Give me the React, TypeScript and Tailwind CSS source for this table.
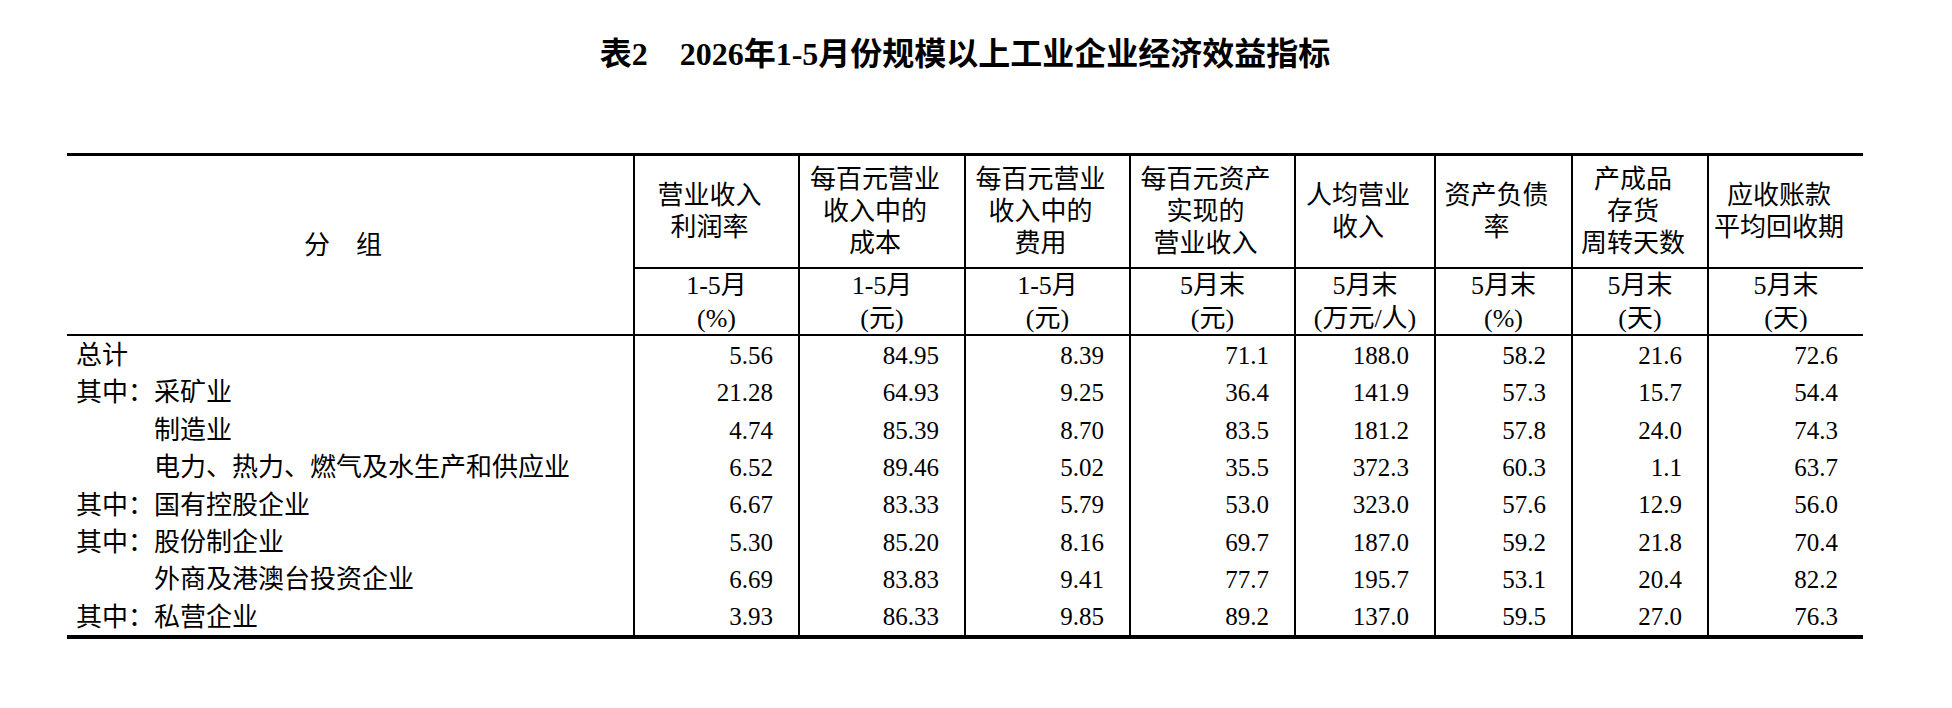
import React from "react";

const cols = "grid-cols-[566px_165px_166px_165px_165px_140px_137px_136px_156px]";

const headTop: string[][] = [
  ["营业收入", "利润率"],
  ["每百元营业", "收入中的", "成本"],
  ["每百元营业", "收入中的", "费用"],
  ["每百元资产", "实现的", "营业收入"],
  ["人均营业", "收入"],
  ["资产负债", "率"],
  ["产成品", "存货", "周转天数"],
  ["应收账款", "平均回收期"],
];

const headUnit: string[][] = [
  ["1-5月", "(%)"],
  ["1-5月", "(元)"],
  ["1-5月", "(元)"],
  ["5月末", "(元)"],
  ["5月末", "(万元/人)"],
  ["5月末", "(%)"],
  ["5月末", "(天)"],
  ["5月末", "(天)"],
];

type Row = { prefix?: string; indent?: boolean; name: string; values: string[] };

const rows: Row[] = [
  { name: "总计", values: ["5.56", "84.95", "8.39", "71.1", "188.0", "58.2", "21.6", "72.6"] },
  { prefix: "其中：", name: "采矿业", values: ["21.28", "64.93", "9.25", "36.4", "141.9", "57.3", "15.7", "54.4"] },
  { indent: true, name: "制造业", values: ["4.74", "85.39", "8.70", "83.5", "181.2", "57.8", "24.0", "74.3"] },
  { indent: true, name: "电力、热力、燃气及水生产和供应业", values: ["6.52", "89.46", "5.02", "35.5", "372.3", "60.3", "1.1", "63.7"] },
  { prefix: "其中：", name: "国有控股企业", values: ["6.67", "83.33", "5.79", "53.0", "323.0", "57.6", "12.9", "56.0"] },
  { prefix: "其中：", name: "股份制企业", values: ["5.30", "85.20", "8.16", "69.7", "187.0", "59.2", "21.8", "70.4"] },
  { indent: true, name: "外商及港澳台投资企业", values: ["6.69", "83.83", "9.41", "77.7", "195.7", "53.1", "20.4", "82.2"] },
  { prefix: "其中：", name: "私营企业", values: ["3.93", "86.33", "9.85", "89.2", "137.0", "59.5", "27.0", "76.3"] },
];

export default function App() {
  return (
    <div className="min-h-[708px] w-[1952px] bg-white text-black font-['Liberation_Serif','Noto_Sans_CJK_SC',serif]">
      <div className="ml-[67px] w-[1796px] pt-[34px]">
        {/* Title */}
        <h1 className="text-center text-[32px] leading-[40px] font-bold">表2　2026年1-5月份规模以上工业企业经济效益指标</h1>

        {/* Table */}
        <div className="mt-[79px] border-t-[3px] border-b-4 border-black text-[26px]">
          {/* Header */}
          <div className={`grid ${cols} grid-rows-[113px_65px] border-b-2 border-black`}>
            <div className="row-span-2 flex items-center justify-center pr-[14px]">分　组</div>
            {headTop.map((lines, i) => (
              <div key={i} className="flex flex-col items-center justify-center border-l-2 border-b-2 border-black pr-[14px] leading-[32px]">
                {lines.map(l => <span key={l}>{l}</span>)}
              </div>
            ))}
            {headUnit.map((lines, i) => (
              <div key={i} className="flex flex-col items-center justify-center border-l-2 border-black leading-[33px]">
                {lines.map(l => <span key={l}>{l}</span>)}
              </div>
            ))}
          </div>

          {/* Body */}
          {rows.map(row => (
            <div key={row.name} className={`grid ${cols} h-[37.4px]`}>
              <div className="flex items-center pl-[9px] whitespace-nowrap">
                {row.prefix ? <span className="inline-block w-[78px]">{row.prefix}</span> : row.indent ? <span className="inline-block w-[78px]" /> : null}
                <span>{row.name}</span>
              </div>
              {row.values.map((v, i) => (
                <div key={i} className="flex items-center justify-end border-l-2 border-black pr-[25px] text-[25px]">{v}</div>
              ))}
            </div>
          ))}
        </div>
      </div>
    </div>
  );
}
